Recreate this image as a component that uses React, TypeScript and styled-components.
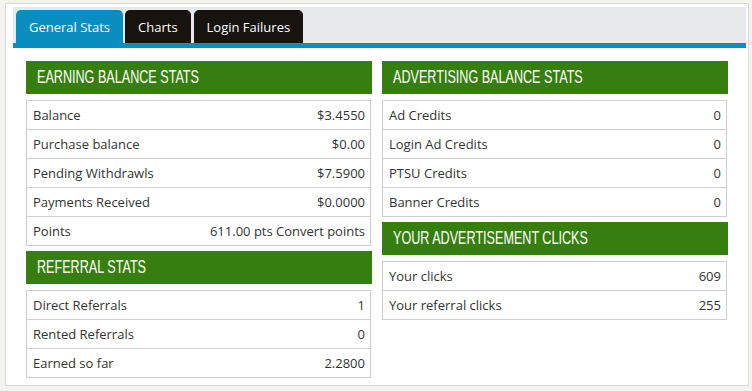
import React from 'react';
import styled, { createGlobalStyle } from 'styled-components';

const GlobalStyle = createGlobalStyle`
  html, body {
    margin: 0;
    padding: 0;
    background: #f3f3ef;
    font-family: "Open Sans", "Liberation Sans", sans-serif;
  }
`;

const Page = styled.div`
  padding: 3px 3px 0 5px;
  width: 752px;
  height: 391px;
  box-sizing: border-box;
`;

const Panel = styled.div`
  width: 744px;
  height: 383px;
  box-sizing: border-box;
  background: #fff;
  border: 1px solid #d9d9d6;
  padding: 3px 2px 0 7px;
`;

const TabBar = styled.div`
  display: flex;
  align-items: flex-end;
  gap: 2px;
  height: 36px;
  padding-left: 3px;
  background: #e7eaed;
  border-bottom: 5px solid #0a8dbf;
`;

const Tab = styled.div<{ $active?: boolean }>`
  height: 33px;
  box-sizing: border-box;
  display: flex;
  align-items: center;
  justify-content: center;
  padding: 0 13px;
  border-radius: 5px 5px 0 0;
  background: ${(p) => (p.$active ? '#0a8dbf' : '#17130f')};
  color: #fff;
  font-size: 13px;
  margin-right: ${(p) => (p.$active ? 0 : 1)}px;
`;

const Content = styled.div`
  display: grid;
  grid-template-columns: 346px 346px;
  column-gap: 10px;
  padding: 13px 0 0 13px;
`;

const Column = styled.div`
  display: flex;
  flex-direction: column;
`;

// section title bar, condensed caps
const Heading = styled.div`
  height: 33px;
  background: #367f0f;
  color: #fff;
  display: flex;
  align-items: center;
  padding-left: 11px;
  margin-bottom: 6px;
  font-family: "Liberation Sans Narrow", "Liberation Sans", sans-serif;
  font-size: 18px;
  text-transform: uppercase;
  overflow: hidden;
  white-space: nowrap;
`;

const Squeeze = styled.span`
  display: inline-block;
  transform: scaleX(0.7);
  transform-origin: left center;
`;

const Table = styled.div`
  border: 1px solid #cfcfcf;
  width: 345px;
  box-sizing: border-box;
  margin-bottom: 5px;
`;

const Row = styled.div`
  display: flex;
  justify-content: space-between;
  align-items: center;
  height: 28px;
  padding: 0 5px 0 6px;
  font-size: 13px;
  color: #333;
  & + & {
    border-top: 1px solid #cfcfcf;
  }
`;

type Item = [string, string];

const Block = ({ title, rows }: { title: string; rows: Item[] }) => (
  <>
    <Heading>
      <Squeeze>{title}</Squeeze>
    </Heading>
    <Table>
      {rows.map(([k, v]) => (
        <Row key={k}>
          <span>{k}</span>
          <span>{v}</span>
        </Row>
      ))}
    </Table>
  </>
);

export default function App() {
  return (
    <Page>
      <GlobalStyle />
      <Panel>
        <TabBar>
          <Tab $active>General Stats</Tab>
          <Tab>Charts</Tab>
          <Tab>Login Failures</Tab>
        </TabBar>
        <Content>
          <Column>
            <Block
              title="Earning Balance Stats"
              rows={[
                ['Balance', '$3.4550'],
                ['Purchase balance', '$0.00'],
                ['Pending Withdrawls', '$7.5900'],
                ['Payments Received', '$0.0000'],
                ['Points', '611.00 pts Convert points'],
              ]}
            />
            <Block
              title="Referral Stats"
              rows={[
                ['Direct Referrals', '1'],
                ['Rented Referrals', '0'],
                ['Earned so far', '2.2800'],
              ]}
            />
          </Column>
          <Column>
            <Block
              title="Advertising Balance Stats"
              rows={[
                ['Ad Credits', '0'],
                ['Login Ad Credits', '0'],
                ['PTSU Credits', '0'],
                ['Banner Credits', '0'],
              ]}
            />
            <Block
              title="Your Advertisement Clicks"
              rows={[
                ['Your clicks', '609'],
                ['Your referral clicks', '255'],
              ]}
            />
          </Column>
        </Content>
      </Panel>
    </Page>
  );
}
